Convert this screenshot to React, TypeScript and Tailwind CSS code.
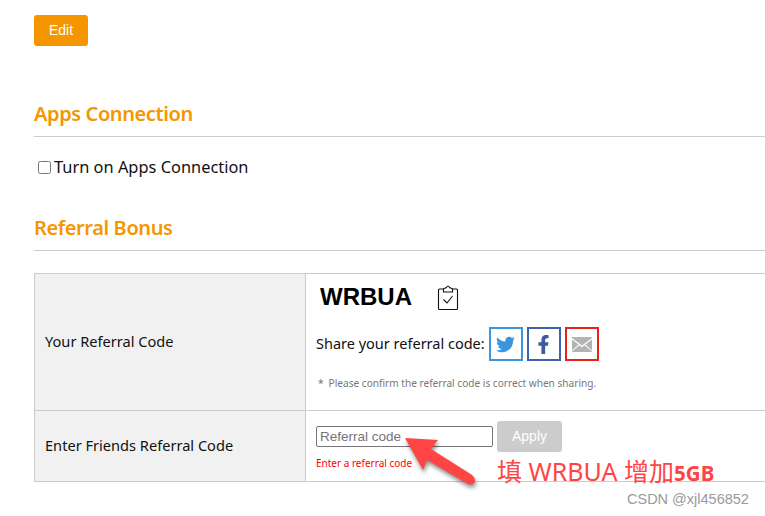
import { FaTwitter, FaFacebookF } from 'react-icons/fa'

const uiFont = "font-['Noto_Sans',sans-serif]"

function SectionTitle({ children }: { children: string }) {
  return (
    <div className="border-b border-[#cccccc] h-[37px] flex items-start">
      <h2 className="text-[20px] leading-[27px] font-semibold tracking-[-0.4px] text-[#f59600]">{children}</h2>
    </div>
  )
}

function ClipboardCheck() {
  return (
    <svg width="22" height="28" viewBox="0 0 22 28" fill="none" stroke="#111" strokeWidth="1.1">
      <path d="M6.5 6 H2.5 Q1.5 6 1.5 7 V25.5 Q1.5 26.5 2.5 26.5 H19.5 Q20.5 26.5 20.5 25.5 V7 Q20.5 6 19.5 6 H15.5" />
      <path d="M6.5 9 V5.8 L9.5 4.5 Q11 1.5 12.5 4.5 L15.5 5.8 V9 Z" />
      <path d="M6.5 16.5 L10 20 L15.5 13" />
    </svg>
  )
}

function MailIcon() {
  return (
    <svg width="20" height="15" viewBox="0 0 20 15" fill="#b3b3b3">
      <path d="M0 1 L10 8.6 L20 1 V0 H0 Z" />
      <path d="M0 2.4 V13.4 L6.6 7.4 Z" />
      <path d="M20 2.4 V13.4 L13.4 7.4 Z" />
      <path d="M0 15 H20 V14.6 L12.6 8.2 L10 10.2 L7.4 8.2 L0 14.6 Z" />
    </svg>
  )
}

function Arrow() {
  return (
    <svg width="80" height="60" viewBox="0 0 80 60" className="absolute left-[400px] top-[430px] drop-shadow-[1px_3px_2px_rgba(0,0,0,0.45)]">
      <path d="M5 8 L38 10 L31 19 L72 45 Q77 50 74 53 Q71 56 66 53 L27 30 L23 40 Z" fill="#ff4444" />
    </svg>
  )
}

export default function App() {
  return (
    <div className={`relative w-[765px] h-[516px] overflow-hidden bg-white pl-[34px] text-[#111] ${uiFont}`}>
      <div className="pt-[15px] h-[100px]">
        <button className="w-[54px] h-[31px] rounded-[3px] bg-[#f59600] text-white text-[14px] font-['Liberation_Sans',sans-serif]">
          Edit
        </button>
      </div>

      <SectionTitle>Apps Connection</SectionTitle>
      <label className="flex items-center h-[60px] pl-1 text-[16.4px]">
        <input type="checkbox" className="w-[13px] h-[13px] m-0 mr-[3px]" />
        <span>Turn on Apps Connection</span>
      </label>

      <div className="pt-[17px]">
        <SectionTitle>Referral Bonus</SectionTitle>
      </div>

      <div className="mt-[22px] grid grid-cols-[271px_1fr] grid-rows-[137px_70px] border border-r-0 border-[#cccccc] h-[209px] text-[14.6px]">
        <div className="bg-[#f1f1f1] border-r border-[#cccccc] border-b flex items-center pl-[10px]">
          Your Referral Code
        </div>
        <div className="border-b border-[#cccccc] pl-[10px]">
          <div className="flex items-center h-[45px] pt-[1px]">
            <span className="pl-[4px] text-[24px] font-bold font-['Liberation_Sans',sans-serif] text-black">WRBUA</span>
            <span className="ml-[25px]"><ClipboardCheck /></span>
          </div>
          <div className="flex items-center gap-[4px] h-[34px] mt-[8px] text-[14.5px]">
            <span className="mr-0">Share your referral code:</span>
            <a className="w-[34px] h-[34px] border-2 border-[#3a96dd] flex items-center justify-center text-[#3a96dd] text-[19px]"><FaTwitter /></a>
            <a className="w-[34px] h-[34px] border-2 border-[#3f63ad] flex items-center justify-center text-[#3f5a9d] text-[19px]"><FaFacebookF /></a>
            <a className="w-[34px] h-[34px] border-2 border-[#e8211b] flex items-center justify-center"><MailIcon /></a>
          </div>
          <p className="mt-[15px] text-[10.1px] leading-[14px] text-[#777777]">
            <span className="mr-[5px] ml-[2px]">*</span>Please confirm the referral code is correct when sharing.
          </p>
        </div>

        <div className="bg-[#f1f1f1] border-r border-[#cccccc] flex items-center pl-[10px]">
          Enter Friends Referral Code
        </div>
        <div className="pl-[10px]">
          <div className="flex items-start gap-[4px] pt-[10px]">
            <input
              placeholder="Referral code"
              className="mt-[5px] w-[177px] h-[21px] border border-[#767676] rounded-[2px] px-[3px] text-[13.5px] font-['Liberation_Sans',sans-serif] placeholder:text-[#757575] outline-none"
            />
            <button className="w-[65px] h-[31px] rounded-[3px] bg-[#cccccc] text-white text-[14px] font-['Liberation_Sans',sans-serif]">
              Apply
            </button>
          </div>
          <p className="mt-[4px] text-[10px] leading-[14px] text-[#ff0000]">Enter a referral code</p>
        </div>
      </div>

      <Arrow />
      <div className="absolute left-[497px] top-[454px] text-[#ff4444] text-[25px] leading-[34px] whitespace-nowrap font-['Noto_Sans','Noto_Sans_CJK_SC',sans-serif]">
        填 WRBUA 增加<span className="font-bold text-[20.5px]">5GB</span>
      </div>
      <div className="absolute left-[627px] top-[489px] text-[#9a9a9a] text-[14.5px] leading-[20px] whitespace-nowrap font-['Liberation_Sans',sans-serif]">
        CSDN @xjl456852
      </div>
    </div>
  )
}
